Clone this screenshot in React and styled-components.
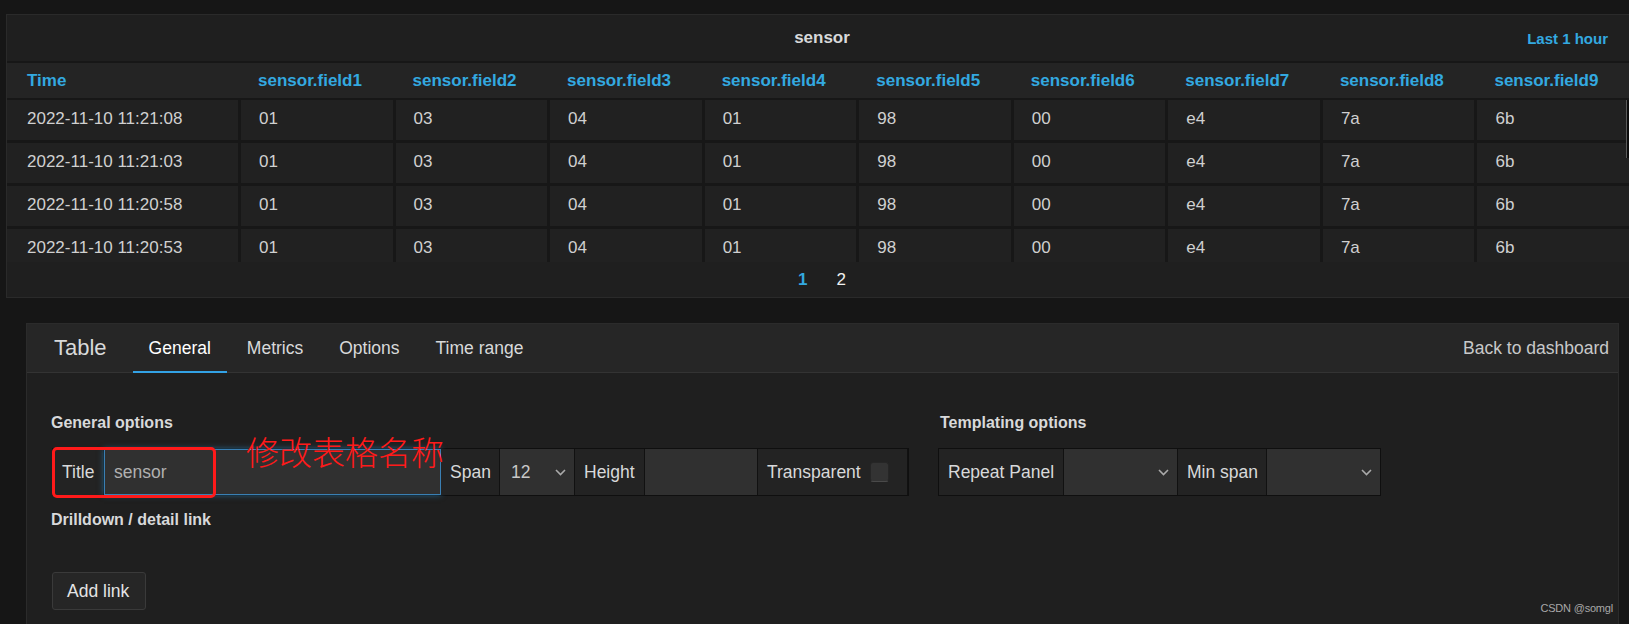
import React from 'react';
import styled, {createGlobalStyle} from 'styled-components';

const GlobalStyle = createGlobalStyle`
	html, body {
		margin: 0;
		padding: 0;
		background: #161616;
	}
	body {
		font-family: "Liberation Sans", Arial, sans-serif;
		color: #d8d9da;
		overflow: hidden;
	}
`;

const BLUE = '#33a9e0';

const Page = styled.div`
	position: relative;
	width: 1629px;
	height: 624px;
	padding-top: 14px;
	box-sizing: border-box;
	overflow: hidden;
`;

/* ---------- table panel ---------- */

const TablePanel = styled.section`
	margin-left: 6px;
	height: 284px;
	background: #1f1f1f;
	border: 1px solid #2a2a2a;
	border-right: none;
	box-sizing: border-box;
	display: flex;
	flex-direction: column;
`;

const PanelTitleBar = styled.div`
	height: 46px;
	display: grid;
	grid-template-columns: 1fr auto 1fr;
	align-items: center;
	padding: 0 21px 0 29px;
`;

const PanelTitle = styled.div`
	font-size: 17px;
	font-weight: 700;
	color: #d8d9da;
`;

const TimeInfo = styled.div`
	justify-self: end;
	font-size: 15px;
	font-weight: 700;
	color: ${BLUE};
`;

const columns = `231px repeat(9, 1fr)`;

const HeaderRow = styled.div`
	display: grid;
	grid-template-columns: ${columns};
	column-gap: 3px;
	height: 35px;
	border-top: 2px solid #171717;
	background: #242424;
	align-items: center;
`;

const HeaderCell = styled.div`
	padding-left: ${(p) => (p.$first ? '20px' : '17px')};
	font-size: 17px;
	font-weight: 700;
	color: ${BLUE};
	white-space: nowrap;
`;

const TableBody = styled.div`
	position: relative;
	height: 164px;
	overflow: hidden;
	padding-top: 2px;
	box-sizing: border-box;
	background: #171717;
	display: flex;
	flex-direction: column;
	gap: 3px;
`;

const BodyRow = styled.div`
	display: grid;
	grid-template-columns: ${columns};
	column-gap: 3px;
	flex: 0 0 40px;
	background: #171717;
`;

const BodyCell = styled.div`
	display: flex;
	align-items: center;
	padding-left: ${(p) => (p.$first ? '20px' : '18px')};
	padding-bottom: 3px;
	background: #212121;
	font-size: 17px;
	color: #d0d0d0;
	white-space: nowrap;
`;

const ScrollThumb = styled.div`
	position: absolute;
	right: 0;
	top: 2px;
	width: 2px;
	height: 58px;
	background: #0c0c0c;
	border-left: 1px solid #5a5a5a;
`;

const Pager = styled.div`
	flex: 1;
	display: flex;
	align-items: center;
	justify-content: center;
	gap: 29px;
	padding-left: 8px;
	font-size: 17px;
`;

const PageLink = styled.span`
	color: ${(p) => (p.$active ? BLUE : '#f0f0f0')};
	font-weight: ${(p) => (p.$active ? 700 : 400)};
`;

/* ---------- edit panel ---------- */

const EditPanel = styled.section`
	margin: 25px 0 0 26px;
	width: 1593px;
	height: 320px;
	background: #1f1f1f;
	border: 1px solid #2b2b2b;
	box-sizing: border-box;
`;

const EditHeader = styled.div`
	display: flex;
	align-items: stretch;
	height: 48px;
	padding: 0 9px 0 27px;
	background: #262626;
	border-bottom: 1px solid #333;
`;

const PanelKind = styled.div`
	align-self: center;
	font-size: 22px;
	color: #d8d9da;
	margin-right: 26px;
`;

const Tabs = styled.nav`
	display: flex;
	gap: 4px;
`;

const Tab = styled.div`
	display: flex;
	align-items: center;
	padding: 2px 16px 0;
	font-size: 17.5px;
	color: ${(p) => (p.$active ? '#ffffff' : '#d8d9da')};
	border-bottom: 2px solid ${(p) => (p.$active ? '#33a2e5' : 'transparent')};
	margin-bottom: -1px;
`;

const BackLink = styled.div`
	margin-left: auto;
	align-self: center;
	font-size: 17.5px;
	color: #c8c9ca;
`;

const EditBody = styled.div`
	padding: 39px 24px 0;
`;

const SectionsRow = styled.div`
	display: flex;
	gap: 31px;
`;

const Section = styled.div`
	display: flex;
	flex-direction: column;
`;

const SectionHeading = styled.div`
	font-size: 16px;
	font-weight: 700;
	line-height: 22px;
	color: #d8d9da;
	margin: ${(p) => p.$margin || '0 0 14px'};
`;

const FormRow = styled.div`
	position: relative;
	display: flex;
	align-self: flex-start;
	height: 48px;
	margin-left: ${(p) => p.$shift || 0}px;
	border: 1px solid #0f0f0f;
	box-sizing: border-box;
`;

const FormLabel = styled.div`
	display: flex;
	align-items: center;
	width: ${(p) => p.$w}px;
	padding-left: 9px;
	box-sizing: border-box;
	background: #232323;
	border-right: 1px solid #111;
	font-size: 17.5px;
	color: #d8d9da;
	white-space: nowrap;
	&:last-child {
		border-right: none;
	}
`;

const FormInput = styled.div`
	display: flex;
	align-items: center;
	width: ${(p) => p.$w}px;
	padding-left: 9px;
	box-sizing: border-box;
	background: #303030;
	border-right: 1px solid #111;
	font-size: 17.5px;
	color: #b0b0b0;
	${(p) =>
		p.$focus &&
		`
		border: 1px solid #3a7fb3;
		box-shadow: 0 0 6px rgba(51, 162, 229, 0.55);
	`}
	&:last-child {
		border-right: none;
	}
`;

const FormSelect = styled(FormInput)`
	justify-content: space-between;
	padding: 0 8px 0 11px;
	color: #c8c8c8;
`;

const Checkbox = styled.span`
	width: 19px;
	height: 20px;
	margin-left: 9px;
	border-radius: 3px;
	background: #333;
	border: 1px solid #262626;
	border-bottom-color: #4a4a4a;
	box-sizing: border-box;
`;

const Annotation = styled.div`
	position: absolute;
	left: -1px;
	top: -2px;
	width: 164px;
	height: 51px;
	border: 3px solid #ff1a1a;
	border-radius: 5px;
	box-sizing: border-box;
`;

const AnnotationText = styled.div`
	position: absolute;
	left: 193px;
	top: -14px;
	font-family: "Noto Sans CJK SC", sans-serif;
	font-size: 33px;
	font-weight: 300;
	line-height: 1;
	color: #ff1a1a;
	white-space: nowrap;
`;

const AddButton = styled.button`
	display: block;
	margin: 41px 0 0 1px;
	height: 38px;
	width: 94px;
	padding: 0 0 0 14px;
	text-align: left;
	background: #262626;
	border: 1px solid #3a3a3a;
	border-radius: 3px;
	font-family: "Liberation Sans", Arial, sans-serif;
	font-size: 17.5px;
	color: #e4e4e4;
`;

const Watermark = styled.div`
	position: absolute;
	right: 16px;
	bottom: 10px;
	font-size: 11px;
	letter-spacing: -0.2px;
	color: #a8a8a8;
`;

const Chevron = () => (
	<svg width="11" height="7" viewBox="0 0 11 7">
		<polyline points="1,1 5.5,5.5 10,1" fill="none" stroke="#aaa" strokeWidth="1.6" />
	</svg>
);

const headers = ['Time', ...Array.from({length: 9}, (_, i) => `sensor.field${i + 1}`)];
const times = ['2022-11-10 11:21:08', '2022-11-10 11:21:03', '2022-11-10 11:20:58', '2022-11-10 11:20:53'];
const values = ['01', '03', '04', '01', '98', '00', 'e4', '7a', '6b'];

export default function App() {
	return (
		<Page>
			<GlobalStyle />
			<TablePanel>
				<PanelTitleBar>
					<span />
					<PanelTitle>sensor</PanelTitle>
					<TimeInfo>Last 1 hour</TimeInfo>
				</PanelTitleBar>
				<HeaderRow>
					{headers.map((h, i) => (
						<HeaderCell key={h} $first={i === 0}>
							{h}
						</HeaderCell>
					))}
				</HeaderRow>
				<TableBody>
					{times.map((t) => (
						<BodyRow key={t}>
							<BodyCell $first>{t}</BodyCell>
							{values.map((v, i) => (
								<BodyCell key={i}>{v}</BodyCell>
							))}
						</BodyRow>
					))}
					<ScrollThumb />
				</TableBody>
				<Pager>
					<PageLink $active>1</PageLink>
					<PageLink>2</PageLink>
				</Pager>
			</TablePanel>

			<EditPanel>
				<EditHeader>
					<PanelKind>Table</PanelKind>
					<Tabs>
						<Tab $active>General</Tab>
						<Tab>Metrics</Tab>
						<Tab>Options</Tab>
						<Tab>Time range</Tab>
					</Tabs>
					<BackLink>Back to dashboard</BackLink>
				</EditHeader>
				<EditBody>
					<SectionsRow>
						<Section>
							<SectionHeading>General options</SectionHeading>
							<FormRow $shift={1}>
								<FormLabel $w={51}>Title</FormLabel>
								<FormInput $w={337} $focus>
									sensor
								</FormInput>
								<FormLabel $w={59}>Span</FormLabel>
								<FormSelect $w={75}>
									12
									<Chevron />
								</FormSelect>
								<FormLabel $w={70}>Height</FormLabel>
								<FormInput $w={113} />
								<FormLabel $w={150}>
									Transparent
									<Checkbox />
								</FormLabel>
								<Annotation />
								<AnnotationText>修改表格名称</AnnotationText>
							</FormRow>
						</Section>
						<Section>
							<SectionHeading>Templating options</SectionHeading>
							<FormRow $shift={-2}>
								<FormLabel $w={125}>Repeat Panel</FormLabel>
								<FormSelect $w={114}>
									<span />
									<Chevron />
								</FormSelect>
								<FormLabel $w={89}>Min span</FormLabel>
								<FormSelect $w={113}>
									<span />
									<Chevron />
								</FormSelect>
							</FormRow>
						</Section>
					</SectionsRow>
					<SectionHeading $margin="13px 0 0">Drilldown / detail link</SectionHeading>
					<AddButton>Add link</AddButton>
				</EditBody>
			</EditPanel>
			<Watermark>CSDN @somgl</Watermark>
		</Page>
	);
}
